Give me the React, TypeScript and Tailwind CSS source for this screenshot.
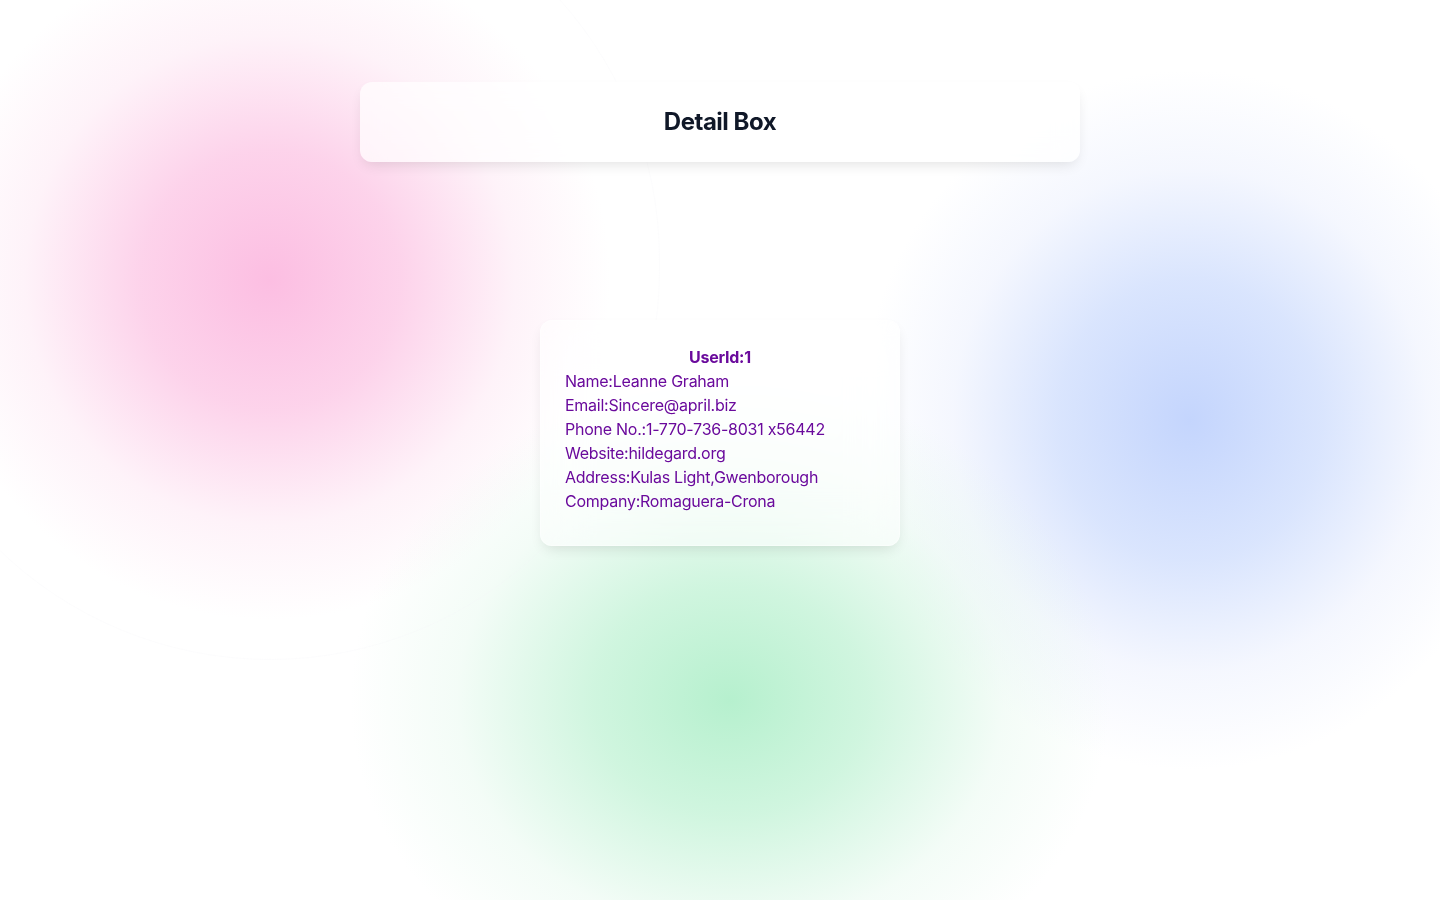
import React from "react";

const user = {
  id: 1,
  name: "Leanne Graham",
  email: "Sincere@april.biz",
  phone: "1-770-736-8031 x56442",
  website: "hildegard.org",
  street: "Kulas Light",
  city: "Gwenborough",
  company: "Romaguera-Crona",
};

export default function App() {
  return (
    <div
      className="relative min-h-[900px] w-full overflow-hidden bg-white [font-feature-settings:'calt'_0]"
      style={{ fontFamily: "Inter, 'Noto Sans', sans-serif" }}
    >
      {/* decorative blobs */}
      <div className="pointer-events-none absolute inset-0">
        <div className="absolute left-[-70px] top-[-60px] h-[680px] w-[680px] rounded-full bg-[radial-gradient(closest-side,rgba(252,190,226,1)_0%,rgba(252,196,228,0.75)_38%,rgba(252,214,235,0.3)_72%,rgba(255,255,255,0)_100%)]" />
        <div className="absolute left-[860px] top-[70px] h-[700px] w-[660px] rounded-full bg-[radial-gradient(closest-side,rgba(196,213,253,1)_0%,rgba(205,220,253,0.75)_40%,rgba(225,232,253,0.35)_72%,rgba(255,255,255,0)_100%)]" />
        <div className="absolute left-[350px] top-[380px] h-[640px] w-[760px] rounded-full bg-[radial-gradient(closest-side,rgba(182,240,206,1)_0%,rgba(196,243,215,0.8)_36%,rgba(222,247,232,0.35)_72%,rgba(255,255,255,0)_100%)]" />
        <div className="absolute left-[-120px] top-[-130px] h-[790px] w-[780px] rounded-full border border-gray-100/25" />
      </div>

      <div className="relative flex flex-col items-center pt-[82px]">
        <div className="w-[720px] rounded-xl bg-white/70 py-6 text-center shadow-[0_6px_14px_-4px_rgba(0,0,0,0.12)] backdrop-blur-md">
          <h1 className="text-2xl font-bold leading-8 tracking-[-0.02em] text-[#101828]">Detail Box</h1>
        </div>

        <div className="mt-[158px] w-[360px] rounded-xl border border-white/40 bg-white/55 px-6 pb-8 pt-6 text-base leading-6 tracking-[-0.016em] text-[#6a0a9c] shadow-[0_6px_14px_-4px_rgba(0,0,0,0.12)] backdrop-blur-xl">
          <p className="text-center font-bold">UserId:{user.id}</p>
          <p>Name:{user.name}</p>
          <p>Email:{user.email}</p>
          <p>Phone No.:{user.phone}</p>
          <p>Website:{user.website}</p>
          <p>
            Address:{user.street},{user.city}
          </p>
          <p>Company:{user.company}</p>
        </div>
      </div>
    </div>
  );
}
